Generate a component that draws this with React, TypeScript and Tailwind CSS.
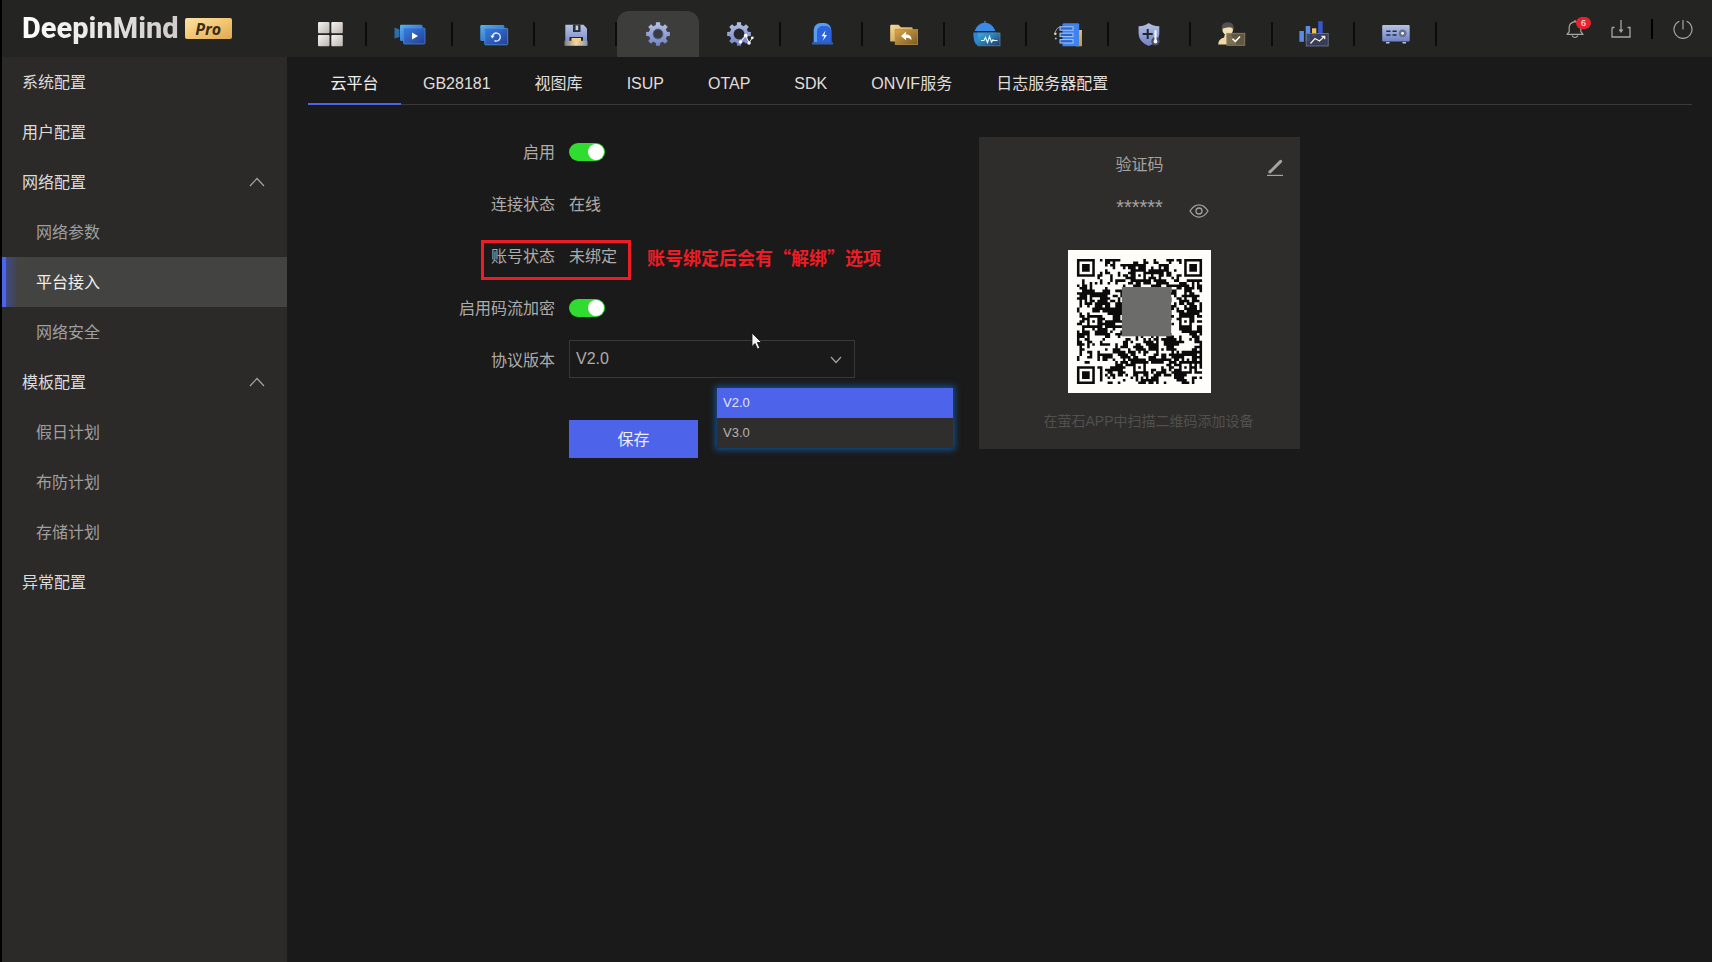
import { useState } from "react";
import type { ReactNode } from "react";

const gearPath = (() => {
  const points: string[] = [];
  const teeth = 8;
  for (let i = 0; i < teeth; i++) {
    const base = (i / teeth) * Math.PI * 2 - Math.PI / 2;
    const steps = [
      [-0.24, 9.2],
      [-0.17, 12],
      [0.17, 12],
      [0.24, 9.2],
    ];
    steps.forEach(([offset, radius]) => {
      const x = 16 + Math.cos(base + offset) * radius;
      const y = 16 + Math.sin(base + offset) * radius;
      points.push(`${x.toFixed(2)} ${y.toFixed(2)}`);
    });
  }
  return `M${points.join("L")}Z`;
})();

function NavSvg({ children }: { children: ReactNode }) {
  return (
    <svg viewBox="0 0 32 32" className="h-8 w-8 overflow-visible" fill="none" aria-hidden="true">
      {children}
    </svg>
  );
}

function Gradients() {
  return (
    <svg className="absolute h-0 w-0" aria-hidden="true">
      <defs>
        <linearGradient id="tile" x1="0" y1="0" x2="1" y2="1">
          <stop stopColor="#f6f4f1" />
          <stop offset="1" stopColor="#b9b5b0" />
        </linearGradient>
        <linearGradient id="blueBack" x1="0" y1="0" x2="1" y2="1">
          <stop stopColor="#5cb2ee" />
          <stop offset="1" stopColor="#1d55c4" />
        </linearGradient>
        <linearGradient id="blueFront" x1="0" y1="0" x2="1" y2="1">
          <stop stopColor="#3a7ee0" />
          <stop offset="1" stopColor="#233f96" />
        </linearGradient>
        <linearGradient id="steel" x1="0" y1="0" x2="0" y2="1">
          <stop stopColor="#b7c2e2" />
          <stop offset="1" stopColor="#6f83c6" />
        </linearGradient>
        <linearGradient id="gold" x1="0" y1="0" x2="1" y2="1">
          <stop stopColor="#f6dc9c" />
          <stop offset="1" stopColor="#c58f34" />
        </linearGradient>
        <linearGradient id="goldFront" x1="0" y1="0" x2="1" y2="1">
          <stop stopColor="#d9a850" />
          <stop offset="1" stopColor="#7d5a20" />
        </linearGradient>
        <linearGradient id="tray" x1="0" y1="0" x2="1" y2="0">
          <stop stopColor="#7c7f88" />
          <stop offset="0.5" stopColor="#f7d9a0" />
          <stop offset="1" stopColor="#8a93ad" />
        </linearGradient>
        <linearGradient id="screen" x1="0" y1="0" x2="1" y2="1">
          <stop stopColor="#35b6e6" />
          <stop offset="1" stopColor="#233a6e" />
        </linearGradient>
      </defs>
    </svg>
  );
}

const navItems: { label: string; icon: ReactNode }[] = [
  {
    label: "应用",
    icon: (
      <g fill="url(#tile)">
        <rect x="4" y="4" width="11.5" height="11.3" rx="1" />
        <rect x="17.3" y="4" width="11.5" height="11.3" rx="1" />
        <rect x="4" y="17" width="11.5" height="11.3" rx="1" />
        <rect x="17.3" y="17" width="11.5" height="11.3" rx="1" />
      </g>
    ),
  },
  {
    label: "预览",
    icon: (
      <>
        <path d="M1.5 9.5L6.5 11.5V19L1.5 20.5Z" fill="#2c6fa8" />
        <rect x="7" y="6.7" width="22.5" height="16.3" rx="1.2" fill="url(#blueBack)" />
        <rect x="10.5" y="10" width="21.5" height="16" rx="1" fill="url(#blueFront)" stroke="#4a8ae6" strokeWidth="0.7" />
        <path d="M19 14.5L25 18L19 21.5Z" fill="#fff" />
      </>
    ),
  },
  {
    label: "回放",
    icon: (
      <>
        <rect x="3.3" y="7" width="24" height="16" rx="1.2" fill="url(#blueBack)" />
        <rect x="7.7" y="10.3" width="23" height="16.5" rx="1" fill="url(#blueFront)" stroke="#4a97dd" strokeWidth="0.8" />
        <path d="M15.3 18.8A4 4 0 1 1 17.5 22.6" stroke="#e8f4ff" strokeWidth="1.3" />
        <path d="M13.3 17.6L15.3 20.6L17.6 17.8Z" fill="#e8f4ff" />
      </>
    ),
  },
  {
    label: "存储",
    icon: (
      <>
        <path d="M6.3 6.7H24.5L28 10.5V27.5H6.3Z" fill="url(#steel)" />
        <path d="M14 6.7H21.5V14H14Z" fill="#2b2f3c" />
        <rect x="16.6" y="7.5" width="2.6" height="4.6" fill="#c9cfe2" />
        <path d="M10.5 19H24V23H10.5Z" fill="#262626" />
        <path d="M12.5 20H22V26H12.5Z" fill="#f4d08c" />
        <rect x="5.5" y="22.8" width="23" height="4.9" fill="url(#tray)" />
      </>
    ),
  },
  {
    label: "系统配置",
    icon: (
      <>
        <path d={gearPath} fill="url(#steel)" />
        <circle cx="16" cy="16" r="5" fill="#3a3b40" stroke="#5d6a94" strokeWidth="0.8" />
      </>
    ),
  },
  {
    label: "智能配置",
    icon: (
      <>
        <path d={gearPath} fill="url(#steel)" />
        <circle cx="16" cy="16" r="5.4" fill="#26262a" />
        <path d="M17.5 24L22.7 17.5L26 24.7L29.3 20" stroke="#fff" strokeWidth="0.9" />
        <g fill="#fff">
          <circle cx="17.5" cy="24" r="1.8" />
          <circle cx="22.7" cy="17.5" r="1.8" />
          <circle cx="26" cy="25" r="1.8" />
          <circle cx="29.3" cy="19.8" r="1.4" />
        </g>
      </>
    ),
  },
  {
    label: "报警",
    icon: (
      <>
        <path d="M8.7 24.5V12A7 7 0 0 1 15.7 5H19.3A7 7 0 0 1 26.3 12V24.5Z" fill="#5a9cf0" />
        <path d="M12 24.5V13A5.5 5.5 0 0 1 17.5 8H20.8A5.5 5.5 0 0 1 26.3 13V24.5Z" fill="#2b63dc" />
        <path d="M7 24.3H28V26.5H7Z" fill="#2f5fb8" />
        <path d="M20.5 12.5L16.5 18.3H19.3L17.8 22.8L22 17H19.3Z" fill="#fff" />
      </>
    ),
  },
  {
    label: "文件管理",
    icon: (
      <>
        <path d="M3.2 8Q3.2 6.8 4.4 6.8H11.5L14 9.2H24.5Q25.7 9.2 25.7 10.4V23.5H3.2Z" fill="url(#gold)" />
        <rect x="8.2" y="11.5" width="22.4" height="15" fill="url(#goldFront)" stroke="#b78e48" strokeWidth="0.8" />
        <path d="M14 18L19 13.8V16.5Q24.5 16.3 24.5 22Q22.5 19.5 19 19.7V22.2Z" fill="#fff" />
      </>
    ),
  },
  {
    label: "状态监测",
    icon: (
      <>
        <circle cx="16" cy="4" r="1.3" fill="#2f62ad" />
        <path d="M5.5 13Q8.5 5 16 4.8Q23.5 5 26.5 13Z" fill="#3a8ae6" />
        <path d="M4.3 14.5H27.5V26.5H7Q4.3 23 4.3 14.5Z" fill="#2f86d8" />
        <rect x="8.8" y="15" width="22.2" height="12.8" fill="url(#screen)" stroke="#4f80a8" strokeWidth="0.8" />
        <path d="M12 22.5H15L16.5 19.5L18.5 24.5L20.5 18.5L22.5 24L24 21.8L25 22.5H28.5" stroke="#e6f6ff" strokeWidth="1.2" />
      </>
    ),
  },
  {
    label: "日志",
    icon: (
      <>
        <path d="M25 12H31V28.3H25Z" fill="url(#gold)" />
        <path d="M12.5 5.3H27Q28.2 5.3 28.2 6.5V28.3H11.5V6.3Z" fill="#3e84f0" />
        <path d="M4 14.5Q5 10 9.5 8.5" stroke="#8fa9cc" strokeWidth="0.9" />
        <circle cx="4.3" cy="15.8" r="1.3" fill="#f1d9a8" />
        <circle cx="4.8" cy="20.5" r="1" fill="#9fb7d8" />
        <g fill="#2c63cf" stroke="#a7c9f8" strokeWidth="1">
          <rect x="9" y="8.8" width="13" height="3.4" />
          <rect x="9" y="15.2" width="13" height="3.4" />
          <rect x="9" y="21.6" width="13" height="3.4" />
        </g>
      </>
    ),
  },
  {
    label: "安全",
    icon: (
      <>
        <path d="M15.7 5Q19 8 26.3 8.3V16Q26 24 15.7 28Q6 24 5.6 16V8.3Q12.5 8 15.7 5Z" fill="url(#steel)" />
        <path d="M14.7 11V21M9.7 16H19.7" stroke="#23252d" strokeWidth="2" />
        <circle cx="22.5" cy="23.3" r="4.2" fill="#4a4f63" />
        <path d="M22.5 13V23.5" stroke="#f2f4fa" strokeWidth="2.2" strokeLinecap="round" />
        <circle cx="22.5" cy="23.5" r="1.9" fill="#f2f4fa" />
      </>
    ),
  },
  {
    label: "用户",
    icon: (
      <>
        <path d="M3.2 26.5Q3.2 21 9 19.5L10 16H16L17 19.5L21 21V26.5Z" fill="#f0d9a6" />
        <circle cx="12.7" cy="11.8" r="5.3" fill="#f3dfb4" />
        <path d="M6.6 11.5Q6 4.2 12.7 4.2Q19.6 4.2 18.9 12.5Q17.5 9.3 14.5 9.3Q9 9.5 6.6 11.5Z" fill="#55514f" />
        <rect x="11.8" y="15.3" width="18" height="12" fill="#6b6045" fillOpacity="0.88" stroke="#8f8668" strokeWidth="0.8" />
        <path d="M17.5 20.8L20.3 23.5L25 18.5" stroke="#fff" strokeWidth="1.5" />
      </>
    ),
  },
  {
    label: "统计",
    icon: (
      <>
        <rect x="2.4" y="13" width="4.5" height="10.8" fill="#5b8ae8" />
        <rect x="8.7" y="8" width="4.5" height="15.5" fill="#5b8ae8" />
        <rect x="15" y="10.3" width="4.3" height="8" fill="#f0c060" />
        <rect x="21.2" y="3.2" width="4.5" height="15" fill="#3558cf" />
        <rect x="9.2" y="15.5" width="22" height="12.5" fill="#39405f" fillOpacity="0.9" stroke="#737a98" strokeWidth="0.8" />
        <path d="M13.5 25.5L18 20.5L22.5 23L27.5 18.3M24.5 18.3H27.7V21.3" stroke="#f6ece0" strokeWidth="1.3" />
      </>
    ),
  },
  {
    label: "设备",
    icon: (
      <>
        <rect x="3.2" y="7" width="27.5" height="16.4" rx="1" fill="url(#steel)" />
        <path d="M7.3 13.2H11.5M13.5 13.2H17.7M7.3 17H11.5M13.5 17H17.7" stroke="#222c4e" strokeWidth="1.6" />
        <circle cx="23.6" cy="15.3" r="3.9" fill="#6a7092" />
        <circle cx="23.6" cy="15.3" r="1.4" fill="#fff" />
        <path d="M7 24.8H10.5M23.5 24.8H27" stroke="#b9c2dc" strokeWidth="1.5" />
      </>
    ),
  },
];

const sideItems = [
  { label: "系统配置" },
  { label: "用户配置" },
  { label: "网络配置", group: true },
  { label: "网络参数", child: true },
  { label: "平台接入", child: true, active: true },
  { label: "网络安全", child: true },
  { label: "模板配置", group: true },
  { label: "假日计划", child: true },
  { label: "布防计划", child: true },
  { label: "存储计划", child: true },
  { label: "异常配置" },
];

const tabs = ["云平台", "GB28181", "视图库", "ISUP", "OTAP", "SDK", "ONVIF服务", "日志服务器配置"];

const QR_SIZE = 49;

function finderCell(x: number, y: number) {
  const corners = [
    [0, 0],
    [QR_SIZE - 7, 0],
    [0, QR_SIZE - 7],
  ];
  for (const [cx, cy] of corners) {
    const dx = x - cx;
    const dy = y - cy;
    if (dx < -1 || dx > 7 || dy < -1 || dy > 7) continue;
    const ring = Math.max(Math.abs(dx - 3), Math.abs(dy - 3));
    return ring === 3 || ring <= 1;
  }
  return null;
}

function alignmentCell(x: number, y: number) {
  const centers = [
    [24, 6],
    [6, 24],
    [42, 24],
    [24, 42],
    [42, 42],
  ];
  for (const [cx, cy] of centers) {
    const ring = Math.max(Math.abs(x - cx), Math.abs(y - cy));
    if (ring <= 2) return ring !== 1;
  }
  return null;
}

const qrPath = (() => {
  let seed = 20231;
  let d = "";
  const cells: boolean[][] = [];
  for (let y = 0; y < QR_SIZE; y++) {
    cells.push([]);
    for (let x = 0; x < QR_SIZE; x++) {
      seed = (seed * 48271) % 2147483647;
      // lean towards the neighbours so that modules form runs
      const left = x > 0 && cells[y][x - 1] ? 0.1 : -0.1;
      const up = y > 0 && cells[y - 1][x] ? 0.1 : -0.1;
      const noise = seed / 2147483647 < 0.52 + left + up;
      const dark = finderCell(x, y) ?? alignmentCell(x, y) ?? noise;
      cells[y].push(dark);
    }
  }
  cells.forEach((row, y) => {
    for (let x = 0; x < QR_SIZE; x++) {
      if (!row[x]) continue;
      const start = x;
      while (row[x + 1]) x++;
      d += `M${start} ${y}h${x - start + 1}v1H${start}z`;
    }
  });
  return d;
})();

function QrCode() {
  return (
    <svg viewBox="-3.5 -3.5 56 56" className="mx-auto block h-[143px] w-[143px] bg-[#fffdf9]" role="img" aria-label="二维码">
      <path d={qrPath} fill="#0b0b0b" />
      <rect x="17.6" y="11" width="19.3" height="19.3" fill="#6c6c6b" />
    </svg>
  );
}

function Header() {
  return (
    <header className="flex h-[57px] bg-[#242423]">
      <div className="flex w-[284px] shrink-0 items-start gap-[6px] pl-5">
        <span className="mt-3 bg-linear-to-r from-white to-[#cfccca] bg-clip-text font-['Roboto',sans-serif] text-[29px] leading-8 font-extrabold text-transparent">
          DeepinMind
        </span>
        <span className="mt-[18px] flex h-[21px] w-[47px] items-center justify-center rounded-xs bg-linear-to-br from-[#fbe3a6] via-[#f3c772] to-[#e0a850] font-['Open_Sans',sans-serif] text-base font-bold text-[#3c2c18] italic">
          Pro
        </span>
      </div>
      <nav className="flex items-end">
        {navItems.map((item, index) => (
          <div key={item.label} className="flex h-[46px] items-center">
            <button
              type="button"
              aria-label={item.label}
              className={`flex h-full items-center justify-center ${
                index === 0 ? "w-[79px] pl-2" : index === 1 ? "w-[84px]" : index === 4 ? "w-[82px]" : "w-20"
              } ${index === 4 ? "rounded-t-xl bg-[#3d3d3c]" : ""}`}
            >
              <NavSvg>{item.icon}</NavSvg>
            </button>
            {index !== 4 && <span className="h-6 w-[2px] bg-[#0c0c0c]" />}
          </div>
        ))}
      </nav>
      <div className="ml-auto flex h-[58px] items-center gap-5 pr-[19px] text-[#a8a6a4]">
        <button type="button" aria-label="消息" className="relative mr-[6px]">
          <svg viewBox="0 0 20 20" className="h-5 w-5" fill="none" stroke="currentColor" strokeWidth="1.2">
            <path d="M2 15.4H18L15.8 12.6V8.3Q15.6 3.5 10 2.6Q4.4 3.5 4.2 8.3V12.6Z" strokeLinejoin="round" />
            <path d="M7 16.6Q10 20.4 13 16.6" />
            <path d="M10 1V2.6" />
          </svg>
          <span className="absolute -top-[2px] left-[11px] flex h-3 w-[15px] items-center justify-center rounded-full bg-[#e8212f] font-['Liberation_Sans',sans-serif] text-[9px] leading-3 text-white">
            6
          </span>
        </button>
        <button type="button" aria-label="下载">
          <svg viewBox="0 0 20 20" className="h-5 w-5" fill="none" stroke="currentColor" strokeWidth="1.3">
            <path d="M1 8.5V18H19V8.5H16.5M1 8.5H3.5" />
            <path d="M10 1V12" />
            <path d="M7.5 10.5L10 14L12.5 10.5Z" fill="currentColor" stroke="none" />
          </svg>
        </button>
        <span className="h-5 w-[2px] bg-black" />
        <button type="button" aria-label="关机">
          <svg viewBox="0 0 20 20" className="h-5 w-5" fill="none" stroke="currentColor" strokeWidth="1.2">
            <path d="M6.4 2.2A9 9 0 1 0 13.6 2.2" />
            <path d="M10 1V10.5" />
          </svg>
        </button>
      </div>
    </header>
  );
}

function Sidebar() {
  return (
    <aside className="w-[285px] shrink-0 bg-[#2b2a29]">
      <ul>
        {sideItems.map((item) => (
          <li key={item.label}>
            <a
              href="#"
              aria-current={item.active ? "page" : undefined}
              className={`relative flex h-[50px] items-center justify-between pr-[22px] ${
                item.child ? "pl-[34px]" : "pl-5"
              } ${item.active ? "bg-[#434342] text-[#f0efee]" : item.child ? "text-[#a19f9d]" : "text-[#dedcda]"}`}
            >
              {item.active && (
                <span className="absolute inset-y-0 left-0 w-4 border-l-4 border-[#4a66f0] bg-linear-to-r from-[#3f4a86] to-transparent" />
              )}
              <span className="pt-[2px]">{item.label}</span>
              {item.group && (
                <svg viewBox="0 0 16 10" className="h-[10px] w-4" fill="none" stroke="#a5a3a1" strokeWidth="1.2">
                  <path d="M1 9L8 1.5L15 9" />
                </svg>
              )}
            </a>
          </li>
        ))}
      </ul>
    </aside>
  );
}

function Row({ label, htmlFor, children }: { label: string; htmlFor?: string; children: ReactNode }) {
  return (
    <div className="flex h-[52px] items-center gap-[14px]">
      {htmlFor ? (
        <label htmlFor={htmlFor} className="w-[247px] pt-[2px] text-right">
          {label}
        </label>
      ) : (
        <span className="w-[247px] pt-[2px] text-right">{label}</span>
      )}
      {children}
    </div>
  );
}

function Toggle({ id }: { id: string }) {
  const [on, setOn] = useState(true);
  return (
    <input
      id={id}
      type="checkbox"
      role="switch"
      checked={on}
      onChange={() => setOn(!on)}
      className="flex h-[18px] w-9 appearance-none items-center rounded-full bg-[#555] px-px before:h-4 before:w-4 before:rounded-full before:bg-white checked:justify-end checked:bg-[#2fdc2f]"
    />
  );
}

function PlatformForm() {
  const [version, setVersion] = useState("V2.0");
  const versions = ["V2.0", "V3.0"];

  return (
    <form className="w-[671px] shrink-0 text-[#aeacaa]" onSubmit={(e) => e.preventDefault()}>
      <Row label="启用" htmlFor="enable">
        <Toggle id="enable" />
      </Row>
      <Row label="连接状态">
        <span className="pt-[2px]">在线</span>
      </Row>
      <div className="relative">
        <Row label="账号状态">
          <span className="pt-[2px]">未绑定</span>
        </Row>
        {/* Callout around the account state */}
        <div className="absolute top-[10px] left-[173px] h-10 w-[150px] border-3 border-[#ee1c25]" />
        <p className="absolute top-[13px] left-[339px] font-['Noto_Sans_CJK_SC',sans-serif] text-lg font-bold whitespace-nowrap text-[#ee1c25]">
          账号绑定后会有“解绑”选项
        </p>
      </div>
      <Row label="启用码流加密" htmlFor="encrypt">
        <Toggle id="encrypt" />
      </Row>
      <div className="relative">
        <Row label="协议版本" htmlFor="version">
          <div className="relative mb-[2px]">
            <select
              id="version"
              value={version}
              onChange={(e) => setVersion(e.target.value)}
              className="block h-[38px] w-[286px] appearance-none border border-[#3a3938] bg-transparent px-[6px] outline-none"
            >
              {versions.map((v) => (
                <option key={v}>{v}</option>
              ))}
            </select>
            <svg
              viewBox="0 0 12 8"
              className="pointer-events-none absolute top-4 right-[13px] h-2 w-3"
              fill="none"
              stroke="#a5a3a1"
              strokeWidth="1.2"
            >
              <path d="M1 1L6 6.5L11 1" />
            </svg>
          </div>
        </Row>
        <ul
          role="listbox"
          aria-label="协议版本"
          className="absolute top-[54px] left-[409px] z-10 w-[236px] bg-[#2f2e2c] text-[13px] shadow-[0_0_6px_2px_#12508c]"
        >
          {versions.map((v) => (
            <li
              key={v}
              role="option"
              aria-selected={v === version}
              onClick={() => setVersion(v)}
              className={`flex h-[30px] items-center px-[6px] ${
                v === version ? "bg-[#4c63ea] text-[#e4e6f8]" : "text-[#b5b3b1]"
              }`}
            >
              {v}
            </li>
          ))}
        </ul>
        <svg viewBox="0 0 12 18" className="absolute -top-[2px] left-[443px] h-[18px] w-3" aria-hidden="true">
          <path d="M1 1V14.5L4 11.5L6.5 17L8.8 16L6.3 10.5H10.5Z" fill="#f4f3f2" stroke="#111" strokeWidth="0.8" />
        </svg>
      </div>
      <button type="submit" className="mt-[34px] ml-[261px] h-[38px] w-[129px] bg-[#4c63ea] pt-[2px] text-[#eceefb]">
        保存
      </button>
    </form>
  );
}

function VerifyCard() {
  return (
    <section className="relative mt-[11px] h-[312px] w-[321px] shrink-0 bg-[#2e2d2c] pt-4 text-center text-[#a5a3a1]">
      <h2>验证码</h2>
      <button type="button" aria-label="编辑" className="absolute top-[22px] right-4">
        <svg viewBox="0 0 18 18" className="h-[18px] w-[18px]" fill="none" stroke="currentColor">
          <path d="M4.2 12.8L14.6 2.4" strokeWidth="3" strokeLinecap="round" />
          <path d="M3 14.2L3.6 11.5" strokeWidth="1.4" />
          <path d="M1 16.4H17" strokeWidth="1.2" />
        </svg>
      </button>
      <div className="relative mt-[18px] h-6 leading-6">
        <span className="text-xl leading-6">******</span>
        <button type="button" aria-label="显示验证码" className="absolute top-2 left-[210px]">
          <svg viewBox="0 0 20 16" className="h-4 w-5" fill="none" stroke="currentColor" strokeWidth="1.3">
            <path d="M1 8Q5 1.8 10 1.8Q15 1.8 19 8Q15 14.2 10 14.2Q5 14.2 1 8Z" />
            <circle cx="10" cy="8" r="3" />
          </svg>
        </button>
      </div>
      <div className="mt-[31px]">
        <QrCode />
      </div>
      <p className="mt-[18px] pl-[18px] text-sm text-[#50504f]">在萤石APP中扫描二维码添加设备</p>
    </section>
  );
}

export default function App() {
  return (
    <div className="flex min-h-screen flex-col border-l-2 border-black bg-[#1b1a1a] font-['Liberation_Sans','Noto_Sans_CJK_SC',sans-serif] text-base">
      <Gradients />
      <Header />
      <div className="flex grow">
        <Sidebar />
        <main className="min-w-0 grow pr-5 pl-[21px]">
          <div role="tablist" className="flex h-12 border-b border-[#3a3939]">
            {tabs.map((tab, index) => (
              <button
                key={tab}
                type="button"
                role="tab"
                aria-selected={index === 0}
                className={`h-12 pt-2 whitespace-nowrap ${
                  index === 0
                    ? "w-[93px] border-b-2 border-[#4c63ea] text-[#f0efee]"
                    : "px-[22px] pb-[2px] text-[#e0dedc]"
                }`}
              >
                {tab}
              </button>
            ))}
          </div>
          <div className="flex pt-[21px]">
            <PlatformForm />
            <VerifyCard />
          </div>
        </main>
      </div>
    </div>
  );
}
